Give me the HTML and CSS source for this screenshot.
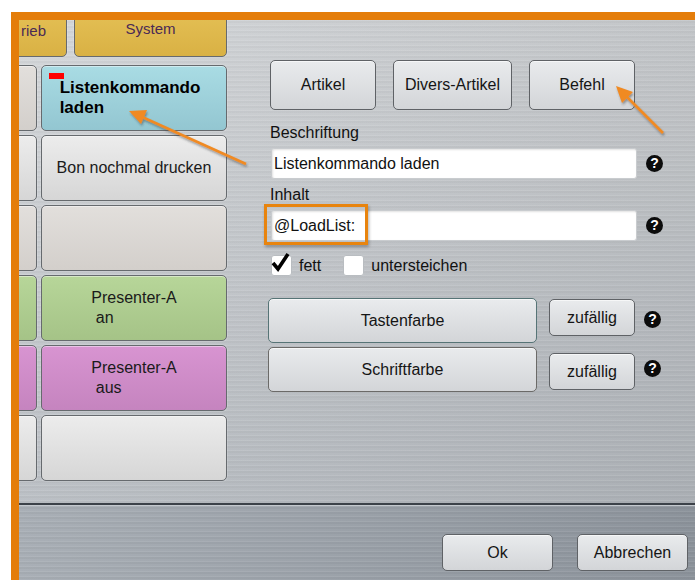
FILE: index.html
```html
<!DOCTYPE html>
<html lang="de">
<head>
  <meta charset="UTF-8" />
  <meta name="viewport" content="width=device-width, initial-scale=1.0"/>
  <title>Taste bearbeiten</title>
  <link rel="stylesheet" href="styles.css">
</head>
<body>
  <div class="frame">
    <div class="workspace">

      <div class="keys">
        <div class="toprow">
          <div class="key yellow wide">rieb</div>
          <div class="key yellow system">System</div>
        </div>
        <div class="grid">
          <div class="key gray"></div>
          <div class="key cyan selected">
            <span class="marker"></span>
            <span class="label bold">Listenkommando<br>laden</span>
          </div>
          <div class="key light"></div>
          <div class="key light"><span class="label">Bon nochmal drucken</span></div>
          <div class="key gray"></div>
          <div class="key gray"></div>
          <div class="key green"></div>
          <div class="key green"><span class="label">Presenter-A<br>&nbsp;an</span></div>
          <div class="key pink"></div>
          <div class="key pink"><span class="label">Presenter-A<br>&nbsp;aus</span></div>
          <div class="key light"></div>
          <div class="key light"></div>
        </div>
      </div>

      <div class="editor">
        <div class="tabs">
          <button class="btn tab">Artikel</button>
          <button class="btn tab tab-wide">Divers-Artikel</button>
          <button class="btn tab">Befehl</button>
        </div>

        <div class="caption">Beschriftung</div>
        <div class="field-row">
          <div class="field">Listenkommando laden</div>
          <span class="help">?</span>
        </div>

        <div class="caption">Inhalt</div>
        <div class="field-row">
          <div class="field highlighted">
            @LoadList:
            <span class="callout"></span>
          </div>
          <span class="help">?</span>
        </div>

        <div class="checks">
          <label class="check">
            <span class="box">
              <svg width="22" height="22" viewBox="0 0 22 22"><path d="M3 11 L8 17 L18 2" fill="none" stroke="#000" stroke-width="3.6" stroke-linejoin="miter"/></svg>
            </span>
            fett
          </label>
          <label class="check">
            <span class="box"></span>
            untersteichen
          </label>
        </div>

        <div class="color-row">
          <button class="btn swatch cyan">Tastenfarbe</button>
          <button class="btn random">zufällig</button>
          <span class="help">?</span>
        </div>
        <div class="color-row">
          <button class="btn swatch beige">Schriftfarbe</button>
          <button class="btn random low">zufällig</button>
          <span class="help">?</span>
        </div>
      </div>
    </div>

    <div class="divider"></div>

    <div class="footer">
      <button class="btn action">Ok</button>
      <button class="btn action">Abbrechen</button>
    </div>
  </div>

  <!-- Pfeile der Anleitung -->
  <svg class="arrows" width="695" height="580" viewBox="0 0 695 580">
    <defs>
      <filter id="schatten" x="-20%" y="-20%" width="140%" height="140%">
        <feDropShadow dx="1" dy="2" stdDeviation="1.2" flood-color="#333" flood-opacity="0.45"/>
      </filter>
    </defs>
    <g filter="url(#schatten)" fill="#f08a24" stroke="#f08a24">
      <line x1="246" y1="164" x2="140" y2="116" stroke-width="2.6"/>
      <polygon points="129,111 147,110 141,124" stroke="none"/>
      <line x1="663" y1="133" x2="624" y2="94" stroke-width="2.6"/>
      <polygon points="616,86 633,92 622,103" stroke="none"/>
    </g>
  </svg>
</body>
</html>
```

FILE: styles.css
```css
body {
  margin: 0;
  background: #ffffff;
  font-family: "Liberation Sans", Arial, sans-serif;
  font-size: 16px;
  color: #151515;
  position: relative;
  width: 695px;
  height: 580px;
  overflow: hidden;
}

.frame {
  margin: 12px 0 0 11px;
  height: 560px;
  border-top: 8px solid #e47d0a;
  border-left: 8px solid #e47d0a;
  display: flex;
  flex-direction: column;
  overflow: hidden;
  background:
    repeating-linear-gradient(180deg, rgba(255,255,255,0.09) 0 1px, rgba(0,0,0,0.025) 1px 3px, transparent 3px 5px),
    linear-gradient(90deg, rgba(255,255,255,0.06), rgba(0,0,0,0.07)),
    linear-gradient(180deg, #d2d5d8, #b3b8be);
}

.workspace {
  height: 483px;
  display: flex;
}

/* linke Tastenfläche */
.keys {
  width: 210px;
  flex: none;
  overflow: hidden;
}

.toprow {
  display: flex;
  gap: 7px;
  height: 37px;
  margin-bottom: 8px;
}

.toprow .key {
  height: 66px;
  margin-top: -29px;
  align-items: flex-start;
}

.toprow .wide {
  width: 100px;
  margin-left: -52px;
  flex: none;
  justify-content: flex-end;
  padding: 30px 20px 0 0;
  font-size: 15px;
}

.toprow .system {
  width: 153px;
  flex: none;
  padding-top: 28px;
  font-size: 15px;
}

.grid {
  display: grid;
  grid-template-columns: 186px 186px;
  grid-auto-rows: 66px;
  gap: 4px;
  margin-left: -168px;
}

.key {
  position: relative;
  box-sizing: border-box;
  border: 1px solid #666a6e;
  border-radius: 5px;
  display: flex;
  align-items: center;
  justify-content: center;
  box-shadow: inset 0 1px 0 rgba(255,255,255,0.45), 0 0 0 1px rgba(255,255,255,0.15);
  color: #1a1a1a;
  line-height: 18px;
}

.key .label {
  line-height: 20px;
  text-align: left;
}

.key .bold {
  font-weight: bold;
  font-size: 17px;
  color: #000;
  margin-left: -8px;
}

.marker {
  position: absolute;
  left: 7px;
  top: 7px;
  width: 15px;
  height: 6px;
  background: #ff0000;
}

.yellow { background: linear-gradient(180deg, #e9c65c, #d9b144); color: #4a2a55; }
.cyan { background: linear-gradient(180deg, #a9dce4, #93c6d1); }
.light { background: linear-gradient(180deg, #ececec, #d6d6d6); }
.gray { background: linear-gradient(180deg, #e2dfdc, #d3cfcb); }
.green { background: linear-gradient(180deg, #b7d699, #a5c387); }
.pink { background: linear-gradient(180deg, #d894d1, #c584bf); }
.beige { background: linear-gradient(180deg, #e4e1dd, #d1cdc9); }

/* rechte Seite */
.editor {
  padding-left: 41px;
  width: 425px;
}

.btn {
  font-family: "Liberation Sans", Arial, sans-serif;
  font-size: 16px;
  color: #151515;
  box-sizing: border-box;
  border: 1px solid #5f6266;
  border-radius: 5px;
  background: linear-gradient(180deg, #e9ebed, #d3d5d8);
  box-shadow: inset 0 1px 0 rgba(255,255,255,0.6);
  padding: 0;
}

.tabs {
  display: flex;
  gap: 17px;
  margin-top: 40px;
}

.tab {
  width: 106px;
  height: 50px;
}

.tab-wide {
  width: 119px;
}

.caption {
  line-height: 18px;
  margin-top: 14px;
  color: #111;
}

.caption + .field-row {
  margin-top: 6px;
}

.field-row {
  display: flex;
  align-items: center;
  gap: 9px;
}

.field {
  position: relative;
  box-sizing: border-box;
  width: 366px;
  height: 31px;
  margin-left: 1px;
  padding: 5px 2px;
  background: #fff;
  border: 1px solid #c9cccf;
  border-radius: 3px;
  box-shadow: inset 1px 1px 2px rgba(0,0,0,0.12);
  color: #111;
  line-height: 20px;
}

.field-row + .caption {
  margin-top: 7px;
}

.callout {
  position: absolute;
  left: -8px;
  top: -7px;
  width: 98px;
  height: 35px;
  border: 3px solid #e8840e;
  box-shadow: 1px 2px 3px rgba(0,0,0,0.3);
}

.help {
  width: 17px;
  height: 17px;
  border-radius: 50%;
  background: #0c0c0c;
  color: #fff;
  font-weight: bold;
  font-size: 14px;
  line-height: 17px;
  text-align: center;
  flex: none;
}

.checks {
  display: flex;
  gap: 22px;
  margin-top: 12px;
  height: 25px;
  align-items: center;
}

.check {
  display: flex;
  align-items: center;
  gap: 7px;
  color: #111;
}

.box {
  position: relative;
  width: 21px;
  height: 21px;
  box-sizing: border-box;
  background: #fff;
  border: 1px solid #b9bdc1;
  border-radius: 3px;
}

.box svg {
  position: absolute;
  left: -2px;
  top: -4px;
}

.check:first-child {
  margin-left: 1px;
}

.color-row {
  display: flex;
  align-items: center;
  gap: 9px;
  margin-top: 4px;
  margin-left: -2px;
}

.checks + .color-row {
  margin-top: 20px;
}

.swatch {
  width: 269px;
  height: 45px;
  margin-right: 3px;
  border-color: #567476;
}

.swatch.beige {
  border-color: #6b6a68;
}

.random {
  width: 86px;
  height: 37px;
  align-self: flex-start;
  margin-top: 1px;
}

.random.low {
  margin-top: 6px;
}

.color-row .help {
  margin-top: -3px;
}

.divider {
  height: 2px;
  background: #3c4249;
  border-bottom: 1px solid #c4c9ce;
}

.footer {
  flex: 1;
  display: flex;
  justify-content: flex-end;
  align-items: flex-start;
  gap: 24px;
  padding: 28px 7px 0 0;
  background:
    repeating-linear-gradient(180deg, rgba(255,255,255,0.07) 0 1px, rgba(0,0,0,0.03) 1px 3px, transparent 3px 5px),
    linear-gradient(90deg, #a9afb6, #8c939b);
}

.action {
  width: 111px;
  height: 37px;
}

.arrows {
  position: absolute;
  left: 0;
  top: 0;
  pointer-events: none;
}
```
